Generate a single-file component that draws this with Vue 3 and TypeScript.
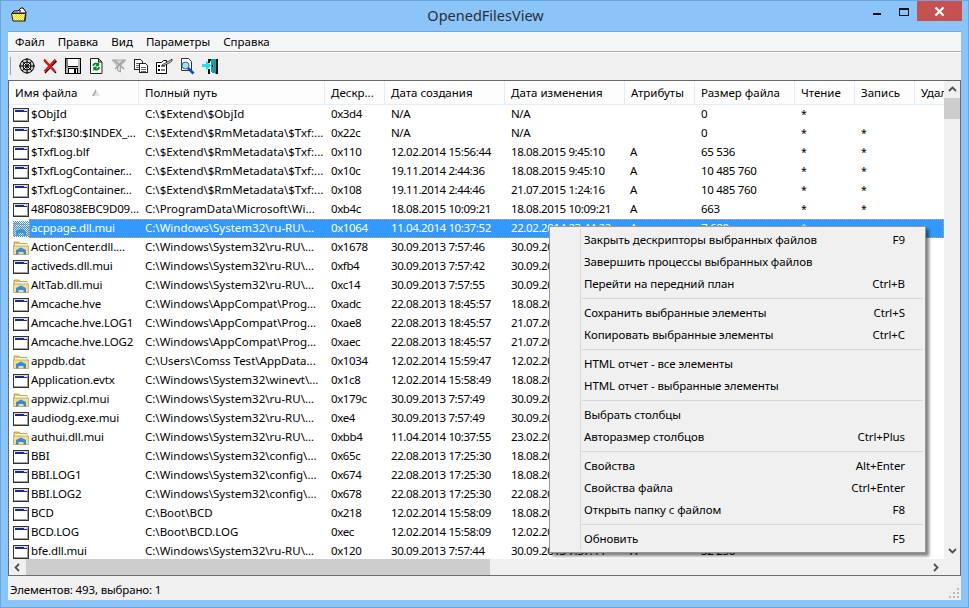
<script setup lang="ts">
type Row = {
  icon: 'app' | 'folder'
  cells: string[]
  selected?: boolean
}

const columns = ['Имя файла', 'Полный путь', 'Дескр...', 'Дата создания', 'Дата изменения', 'Атрибуты', 'Размер файла', 'Чтение', 'Запись', 'Удаление']

const sys = 'C:\\Windows\\System32\\ru-RU\\...'
const compat = 'C:\\Windows\\AppCompat\\Prog...'
const config = 'C:\\Windows\\System32\\config\\...'
const txf = 'C:\\$Extend\\$RmMetadata\\$Txf:...'

const rows: Row[] = [
  { icon: 'app', cells: ['$ObjId', 'C:\\$Extend\\$ObjId', '0x3d4', 'N/A', 'N/A', '', '0', '*', ''] },
  { icon: 'app', cells: ['$Txf:$I30:$INDEX_...', txf, '0x22c', 'N/A', 'N/A', '', '0', '*', '*'] },
  { icon: 'app', cells: ['$TxfLog.blf', txf, '0x110', '12.02.2014 15:56:44', '18.08.2015 9:45:10', 'A', '65 536', '*', '*'] },
  { icon: 'app', cells: ['$TxfLogContainer...', txf, '0x10c', '19.11.2014 2:44:36', '18.08.2015 9:45:10', 'A', '10 485 760', '*', '*'] },
  { icon: 'app', cells: ['$TxfLogContainer...', txf, '0x108', '19.11.2014 2:44:46', '21.07.2015 1:24:16', 'A', '10 485 760', '*', '*'] },
  { icon: 'app', cells: ['48F08038EBC9D09...', 'C:\\ProgramData\\Microsoft\\Wi...', '0xb4c', '18.08.2015 10:09:21', '18.08.2015 10:09:21', 'A', '663', '*', '*'] },
  { icon: 'folder', selected: true, cells: ['acppage.dll.mui', sys, '0x1064', '11.04.2014 10:37:52', '22.02.2014 23:44:22', 'A', '7 680', '*', ''] },
  { icon: 'folder', cells: ['ActionCenter.dll....', sys, '0x1678', '30.09.2013 7:57:46', '30.09.2013 7:57:46', 'A', '', '*', ''] },
  { icon: 'app', cells: ['activeds.dll.mui', sys, '0xfb4', '30.09.2013 7:57:42', '30.09.2013 7:57:42', 'A', '', '*', ''] },
  { icon: 'folder', cells: ['AltTab.dll.mui', sys, '0xc14', '30.09.2013 7:57:55', '30.09.2013 7:57:55', 'A', '', '*', ''] },
  { icon: 'app', cells: ['Amcache.hve', compat, '0xadc', '22.08.2013 18:45:57', '18.08.2015 9:45:10', 'A', '', '*', '*'] },
  { icon: 'app', cells: ['Amcache.hve.LOG1', compat, '0xae8', '22.08.2013 18:45:57', '21.07.2015 1:24:16', 'A', '', '*', '*'] },
  { icon: 'app', cells: ['Amcache.hve.LOG2', compat, '0xaec', '22.08.2013 18:45:57', '21.07.2015 1:24:16', 'A', '', '*', '*'] },
  { icon: 'folder', cells: ['appdb.dat', 'C:\\Users\\Comss Test\\AppData...', '0x1034', '12.02.2014 15:59:47', '12.02.2014 15:59:47', 'A', '', '*', '*'] },
  { icon: 'app', cells: ['Application.evtx', 'C:\\Windows\\System32\\winevt\\...', '0x1c8', '12.02.2014 15:58:49', '18.08.2015 9:45:10', 'A', '', '*', '*'] },
  { icon: 'folder', cells: ['appwiz.cpl.mui', sys, '0x179c', '30.09.2013 7:57:49', '30.09.2013 7:57:49', 'A', '', '*', ''] },
  { icon: 'app', cells: ['audiodg.exe.mui', sys, '0xe4', '30.09.2013 7:57:49', '30.09.2013 7:57:49', 'A', '', '*', ''] },
  { icon: 'folder', cells: ['authui.dll.mui', sys, '0xbb4', '11.04.2014 10:37:55', '23.02.2014 5:12:30', 'A', '', '*', ''] },
  { icon: 'app', cells: ['BBI', config, '0x65c', '22.08.2013 17:25:30', '18.08.2015 9:45:10', 'A', '', '*', '*'] },
  { icon: 'app', cells: ['BBI.LOG1', config, '0x674', '22.08.2013 17:25:30', '18.08.2015 9:45:10', 'A', '', '*', '*'] },
  { icon: 'app', cells: ['BBI.LOG2', config, '0x678', '22.08.2013 17:25:30', '22.08.2013 17:25:30', 'A', '', '*', '*'] },
  { icon: 'app', cells: ['BCD', 'C:\\Boot\\BCD', '0x218', '12.02.2014 15:58:09', '18.08.2015 9:45:10', 'A', '', '*', '*'] },
  { icon: 'app', cells: ['BCD.LOG', 'C:\\Boot\\BCD.LOG', '0xec', '12.02.2014 15:58:09', '12.02.2014 15:58:09', 'A', '', '*', '*'] },
  { icon: 'app', cells: ['bfe.dll.mui', sys, '0x120', '30.09.2013 7:57:44', '30.09.2013 7:57:44', 'A', '32 256', '*', ''] },
]

const menuGroups = [
  [
    { label: 'Закрыть дескрипторы выбранных файлов', keys: 'F9' },
    { label: 'Завершить процессы выбранных файлов', keys: '' },
    { label: 'Перейти на передний план', keys: 'Ctrl+B' },
  ],
  [
    { label: 'Сохранить выбранные элементы', keys: 'Ctrl+S' },
    { label: 'Копировать выбранные элементы', keys: 'Ctrl+C' },
  ],
  [
    { label: 'HTML отчет - все элементы', keys: '' },
    { label: 'HTML отчет - выбранные элементы', keys: '' },
  ],
  [
    { label: 'Выбрать столбцы', keys: '' },
    { label: 'Авторазмер столбцов', keys: 'Ctrl+Plus' },
  ],
  [
    { label: 'Свойства', keys: 'Alt+Enter' },
    { label: 'Свойства файла', keys: 'Ctrl+Enter' },
    { label: 'Открыть папку с файлом', keys: 'F8' },
  ],
  [{ label: 'Обновить', keys: 'F5' }],
]

const menuItems = ['Файл', 'Правка', 'Вид', 'Параметры', 'Справка']
</script>

<template>
  <div class="window">
    <header class="titlebar">
      <svg class="app-icon" width="18" height="16" viewBox="0 0 18 16">
        <defs>
          <pattern id="yel" width="2" height="2" patternUnits="userSpaceOnUse">
            <rect width="2" height="2" fill="#fffbb0" />
            <rect width="1" height="1" fill="#f2d900" />
            <rect x="1" y="1" width="1" height="1" fill="#f2d900" />
          </pattern>
        </defs>
        <path d="M2 6l2-2h4l3-3h2l3 4v1z" fill="#fff" stroke="#000" />
        <rect x="9" y="3" width="2" height="2" fill="#d020b0" />
        <path d="M1.500 6.500h14l-1 7.500h-11.500z" fill="url(#yel)" stroke="#222" />
        <path d="M15.500 6.500h1l-1 8h-1z" fill="#222" />
      </svg>
      <div class="title">OpenedFilesView</div>
      <div class="caption">
        <span class="caption__min"></span>
        <span class="caption__max"></span>
        <span class="caption__close">
          <svg width="11" height="11" viewBox="0 0 11 11">
            <path d="M1.500 1.500l8 8M9.500 1.500l-8 8" stroke="#fff" stroke-width="2.200" />
          </svg>
        </span>
      </div>
    </header>

    <nav class="menubar">
      <span v-for="m in menuItems" :key="m" class="menubar__item">{{ m }}</span>
    </nav>

    <div class="toolbar">
      <span class="toolbar__grip"></span>
      <span class="tool">
        <svg width="16" height="16" viewBox="0 0 16 16">
          <circle cx="8" cy="8" r="7" fill="#c8c8c8" stroke="#000" />
          <circle cx="8" cy="8" r="4" fill="#fff" stroke="#000" />
          <path d="M8 0v16M0 8h16M3 3l10 10M13 3L3 13" stroke="#000" stroke-width="1" />
          <circle cx="8" cy="8" r="1.600" fill="#000" />
        </svg>
      </span>
      <span class="tool">
        <svg width="16" height="16" viewBox="0 0 16 16">
          <path d="M2.500 3l11.500 12M14.500 3L3 15" stroke="#000" stroke-width="1.400" />
          <path d="M2 1.500l11 12M13.500 1.500L2.500 13.500" stroke="#e8141c" stroke-width="2.200" />
        </svg>
      </span>
      <span class="tool">
        <svg width="16" height="16" viewBox="0 0 16 16" shape-rendering="crispEdges">
          <rect x="0.500" y="0.500" width="15" height="15" fill="#c0c0c0" stroke="#000" />
          <rect x="3" y="1" width="10" height="7" fill="#fff" />
          <rect x="3" y="8" width="10" height="1" fill="#000" />
          <rect x="1" y="1" width="2" height="9" fill="#808080" />
          <rect x="3.500" y="10.500" width="9" height="5" fill="#fff" stroke="#000" />
          <rect x="9" y="11" width="2" height="4" fill="#000" />
        </svg>
      </span>
      <span class="tool">
        <svg width="16" height="18" viewBox="0 0 16 18">
          <path d="M2.500 1.500h8l3.500 3.500v11.500h-11.500z" fill="#fff" stroke="#222" />
          <path d="M10.500 1.500v3.500h3.500z" fill="#bbb" stroke="#222" />
          <path d="M4.500 9c0-3 3-4.500 5.500-3l1.200-1.200V9.200H7l1.400-1.400c-1.200-.5-2 0-2.200 1.200z" fill="#008a20" />
          <path d="M12 10c0 3-3 4.500-5.500 3l-1.200 1.200V9.800H9.500l-1.400 1.400c1.200.5 2 0 2.200-1.200z" fill="#008a20" />
        </svg>
      </span>
      <span class="tool">
        <svg width="16" height="16" viewBox="0 0 16 16">
          <path d="M1 2h14L9.500 8v6l-3-1.500V8z" fill="#d8d8d8" stroke="#a8a8a8" />
          <path d="M3 2l10 9M13 2L4 11" stroke="#a0a0a0" stroke-width="1.500" />
        </svg>
      </span>
      <span class="tool">
        <svg width="16" height="16" viewBox="0 0 16 16" shape-rendering="crispEdges">
          <path d="M1.500 1.500h6l2 2v8h-8z" fill="#fff" stroke="#222" />
          <path d="M3 5h4M3 7h4M3 9h4" stroke="#666" />
          <path d="M6.500 5.500h6l2 2v7h-8z" fill="#fff" stroke="#222" />
          <path d="M8 9h5M8 11h5M8 13h5" stroke="#666" />
        </svg>
      </span>
      <span class="tool">
        <svg width="18" height="16" viewBox="0 0 18 16">
          <path d="M1.500 4.500h5l2-2h3v13h-10z" fill="#fff" stroke="#000" />
          <path d="M3 7h2v2H3zM3 11h2v2H3z" fill="#000" />
          <path d="M6 8h4M6 12h4" stroke="#000" />
          <path d="M7 7l8-4.500 2-1.500v2l-2 1.500L8 8z" fill="#dfe4f2" stroke="#000" stroke-width="0.700" />
        </svg>
      </span>
      <span class="tool">
        <svg width="16" height="17" viewBox="0 0 16 17">
          <path d="M2.500 .5h7l3 3v9h-10z" fill="#fff" stroke="#333" />
          <circle cx="6.500" cy="7.500" r="3.500" fill="#9fe2ee" stroke="#2a6a8a" />
          <path d="M9 10l5.500 5.500" stroke="#1a3fd0" stroke-width="2.600" />
        </svg>
      </span>
      <span class="tool">
        <svg width="16" height="16" viewBox="0 0 16 16" shape-rendering="crispEdges">
          <path d="M5.500 .5h10v15h-2v-13h-6v2h-2z" fill="#111" />
          <path d="M5.500 10.500h2v5h-2z" fill="#111" />
          <path d="M9 1l5-0v15l-5-2z" fill="#16a0a8" />
          <rect x="10" y="7" width="1" height="2" fill="#000" />
          <path d="M0 6h4V3l5 4.500L4 12V9H0z" fill="#22e0f0" />
        </svg>
      </span>
    </div>

    <section class="list">
      <div class="table">
        <div class="head">
          <div v-for="(c, i) in columns" :key="c" class="head__cell">
            {{ c }}
            <svg v-if="i === 0" class="head__sort" width="9" height="8" viewBox="0 0 9 8">
              <path d="M5 0L9 7H1z" fill="#e4e4e4" />
              <path d="M5 0L1 7h2L5 3z" fill="#a8a8a8" />
            </svg>
          </div>
        </div>
        <div v-for="(row, r) in rows" :key="r" class="row" :class="{ 'row--selected': row.selected }">
          <div class="cell cell--name">
            <svg v-if="row.icon === 'app'" class="file-icon" width="16" height="16" viewBox="0 0 16 16" shape-rendering="crispEdges">
              <rect x="0" y="1" width="16" height="14" fill="#333" />
              <rect x="1" y="2" width="14" height="12" fill="#fff" />
              <rect x="2" y="3" width="12" height="2" fill="#1b2a8c" />
              <rect x="11" y="3" width="3" height="1" fill="#dfe3f2" />
              <rect x="1" y="2" width="14" height="1" fill="#d8d8d8" />
              <rect x="14" y="3" width="1" height="11" fill="#a0a0a0" />
              <rect x="1" y="13" width="14" height="1" fill="#a0a0a0" />
            </svg>
            <svg v-else class="file-icon" width="16" height="16" viewBox="0 0 16 16">
              <defs>
                <pattern id="sel" width="2" height="2" patternUnits="userSpaceOnUse">
                  <rect width="1" height="1" fill="#3399ff" />
                  <rect x="1" y="1" width="1" height="1" fill="#3399ff" />
                </pattern>
              </defs>
              <path d="M1 3.500V2h5l1 1.500h7V6H1z" fill="#ecc55c" stroke="#b8964a" stroke-width="0.800" />
              <rect x="2" y="4" width="12" height="3" fill="#fffbe6" />
              <path d="M.5 6h15v8.500H.5z" fill="#f2dd92" stroke="#b8a468" stroke-width="0.800" />
              <path d="M3 14.500V10l5-2.500 5 2.500v4.500h-2.500V12h-5v2.500z" fill="#3a8bd6" />
              <rect v-if="row.selected" width="16" height="16" fill="url(#sel)" shape-rendering="crispEdges" />
            </svg>
            <span class="cell__text">{{ row.cells[0] }}</span>
          </div>
          <div v-for="(v, i) in row.cells.slice(1)" :key="i" class="cell">{{ v }}</div>
          <div class="cell"></div>
        </div>
      </div>

      <div class="vscroll">
        <span class="arrow">
          <svg width="9" height="6" viewBox="0 0 9 6"><path d="M1 5l3.500-3.500L8 5" fill="none" stroke="#505050" stroke-width="1.800" /></svg>
        </span>
        <div class="vscroll__track"><div class="vscroll__thumb"></div></div>
        <span class="arrow">
          <svg width="9" height="6" viewBox="0 0 9 6"><path d="M1 1l3.500 3.500L8 1" fill="none" stroke="#505050" stroke-width="1.800" /></svg>
        </span>
      </div>

      <div class="hscroll">
        <span class="arrow">
          <svg width="6" height="9" viewBox="0 0 6 9"><path d="M5 1L1.500 4.500 5 8" fill="none" stroke="#505050" stroke-width="1.800" /></svg>
        </span>
        <div class="hscroll__track"><div class="hscroll__thumb"></div></div>
        <span class="arrow">
          <svg width="6" height="9" viewBox="0 0 6 9"><path d="M1 1l3.500 3.500L1 8" fill="none" stroke="#505050" stroke-width="1.800" /></svg>
        </span>
      </div>
      <div class="corner"></div>
    </section>

    <footer class="status">
      <span>Элементов: 493, выбрано: 1</span>
      <svg class="status__grip" width="10" height="10" viewBox="0 0 10 10" shape-rendering="crispEdges">
        <path d="M8 0h2v2H8zM4 4h2v2H4zM8 4h2v2H8zM0 8h2v2H0zM4 8h2v2H4zM8 8h2v2H8z" fill="#b8b8b8" />
      </svg>
    </footer>

    <div class="context">
      <template v-for="(group, g) in menuGroups" :key="g">
        <div v-if="g > 0" class="context__sep"></div>
        <div v-for="item in group" :key="item.label" class="context__item">
          <span>{{ item.label }}</span>
          <span>{{ item.keys }}</span>
        </div>
      </template>
    </div>
  </div>
</template>

<style>
html,
body {
  margin: 0;
  overflow: hidden;
}
</style>

<style scoped>
.window {
  position: relative;
  display: flex;
  flex-direction: column;
  box-sizing: border-box;
  width: 969px;
  height: 608px;
  padding: 0 8px 8px;
  background: #8ac4f9;
  box-shadow: inset 0 0 0 1px #6aa6dc;
  font-family: "Noto Sans", "Open Sans", sans-serif;
  font-size: 11.5px;
  color: #000;
}

.titlebar {
  position: relative;
  display: flex;
  align-items: center;
  justify-content: center;
  height: 31px;
  flex-shrink: 0;
}

.app-icon {
  position: absolute;
  left: 2px;
  top: 7px;
}

.title {
  font-size: 14.500px;
  color: #2a2f36;
  margin: -1px 0 0 2px;
}

.caption {
  position: absolute;
  right: -1px;
  top: 1px;
  display: flex;
  align-items: flex-start;
}

.caption__min {
  width: 8px;
  height: 2px;
  margin: 12px 18px 0 0;
  background: #111;
}

.caption__max {
  box-sizing: border-box;
  width: 10px;
  height: 8px;
  margin: 7px 8px 0 0;
  border: 1px solid #111;
  border-top-width: 2px;
}

.caption__close {
  display: flex;
  align-items: center;
  justify-content: center;
  width: 45px;
  height: 20px;
  background: #c75050;
}

.menubar {
  display: flex;
  align-items: center;
  box-sizing: border-box;
  height: 20px;
  flex-shrink: 0;
  padding: 0 0 1px 7px;
  gap: 13px;
  background: #f5f6f7;
  border-top: 1px solid #6fa9de;
}

.toolbar {
  display: flex;
  align-items: center;
  box-sizing: border-box;
  height: 29px;
  flex-shrink: 0;
  padding-left: 2px;
  background: #f0f0f0;
  border-top: 1px solid #a9a9a9;
  box-shadow: inset 0 1px 0 #fff;
}

.toolbar__grip {
  width: 1px;
  height: 18px;
  margin-right: 5px;
  background: #a0a0a0;
}

.tool {
  display: flex;
  align-items: center;
  justify-content: center;
  width: 22.800px;
  height: 22px;
}

.list {
  flex: 1;
  min-height: 0;
  display: grid;
  grid-template-columns: 1fr 16px;
  grid-template-rows: 1fr 16px;
  background: #f0f0f0;
  border: 1px solid #696969;
  border-bottom-color: #6d6d6d;
}

.table {
  overflow: hidden;
  background: #fff;
  min-width: 0;
  min-height: 0;
}

.head,
.row {
  display: grid;
  grid-template-columns: 130px 186px 60px 120px 120px 70px 100px 60px 60px 60px;
}

.head {
  height: 24px;
  box-sizing: border-box;
  background: #fdfdfe;
  border-bottom: 1px solid #e4ecf7;
}

.head__cell {
  display: flex;
  align-items: center;
  padding-left: 6px;
  border-right: 1px solid #e4ecf7;
  white-space: nowrap;
  overflow: hidden;
}

.head__sort {
  margin-left: auto;
  margin-right: 38px;
}

.row {
  position: relative;
  height: 19px;
  line-height: 18px;
}

.cell {
  padding-left: 6px;
  white-space: nowrap;
  overflow: hidden;
}

/* digits run wider than in the original face */
.cell:nth-child(3) {
  letter-spacing: -0.4px;
}

.cell:nth-child(4),
.cell:nth-child(5) {
  letter-spacing: -0.4px;
}

.cell:nth-child(6) {
  padding-left: 5px;
}

.cell:nth-child(7) {
  letter-spacing: -0.3px;
}

.cell:nth-child(8),
.cell:nth-child(9) {
  font-size: 10.500px;
}

.cell--name {
  display: flex;
  align-items: center;
  padding-left: 4px;
}

.file-icon {
  flex-shrink: 0;
}

.cell__text {
  flex: 1;
  align-self: stretch;
  padding-left: 2px;
  overflow: hidden;
  letter-spacing: -0.15px;
}

.row--selected {
  color: #fff;
}

.row--selected .cell:not(.cell--name),
.row--selected .cell__text {
  background: #3399ff;
}

.row--selected::after {
  content: "";
  position: absolute;
  inset: 0 0 0 20px;
  border: 1px dotted #e0a060;
}

.arrow {
  display: flex;
  align-items: center;
  justify-content: center;
  flex-shrink: 0;
  width: 16px;
  height: 16px;
}

.vscroll {
  display: flex;
  flex-direction: column;
  min-height: 0;
}

.vscroll__track {
  flex: 1;
  padding-top: 1px;
}

.vscroll__thumb {
  height: 21px;
  background: #cdcdcd;
}

.hscroll {
  display: flex;
  min-width: 0;
}

.hscroll__track {
  flex: 1;
}

.hscroll__thumb {
  width: 464px;
  height: 16px;
  background: #cdcdcd;
  margin-left: 1px;
}

.status {
  position: relative;
  display: flex;
  align-items: center;
  box-sizing: border-box;
  height: 24px;
  flex-shrink: 0;
  padding: 3px 0 0 2px;
  background: #f0f0f0;
  letter-spacing: -0.15px;
}

.status__grip {
  position: absolute;
  right: 2px;
  bottom: 2px;
}

.context {
  position: absolute;
  left: 549px;
  top: 226px;
  width: 377px;
  box-sizing: border-box;
  padding: 2px;
  background: #f0f0f0;
  border: 1px solid #979797;
  box-shadow: 3px 3px 3px rgba(0, 0, 0, 0.5);
  letter-spacing: -0.08px;
}

.context::before {
  content: "";
  position: absolute;
  left: 30px;
  top: 2px;
  bottom: 2px;
  width: 1px;
  background: #d7d7d7;
}

.context__item {
  display: flex;
  align-items: center;
  justify-content: space-between;
  box-sizing: border-box;
  height: 22px;
  padding: 0 18px 2px 32px;
}

.context__sep {
  height: 1px;
  margin: 3px 0 3px 30px;
  background: #d7d7d7;
}
</style>
